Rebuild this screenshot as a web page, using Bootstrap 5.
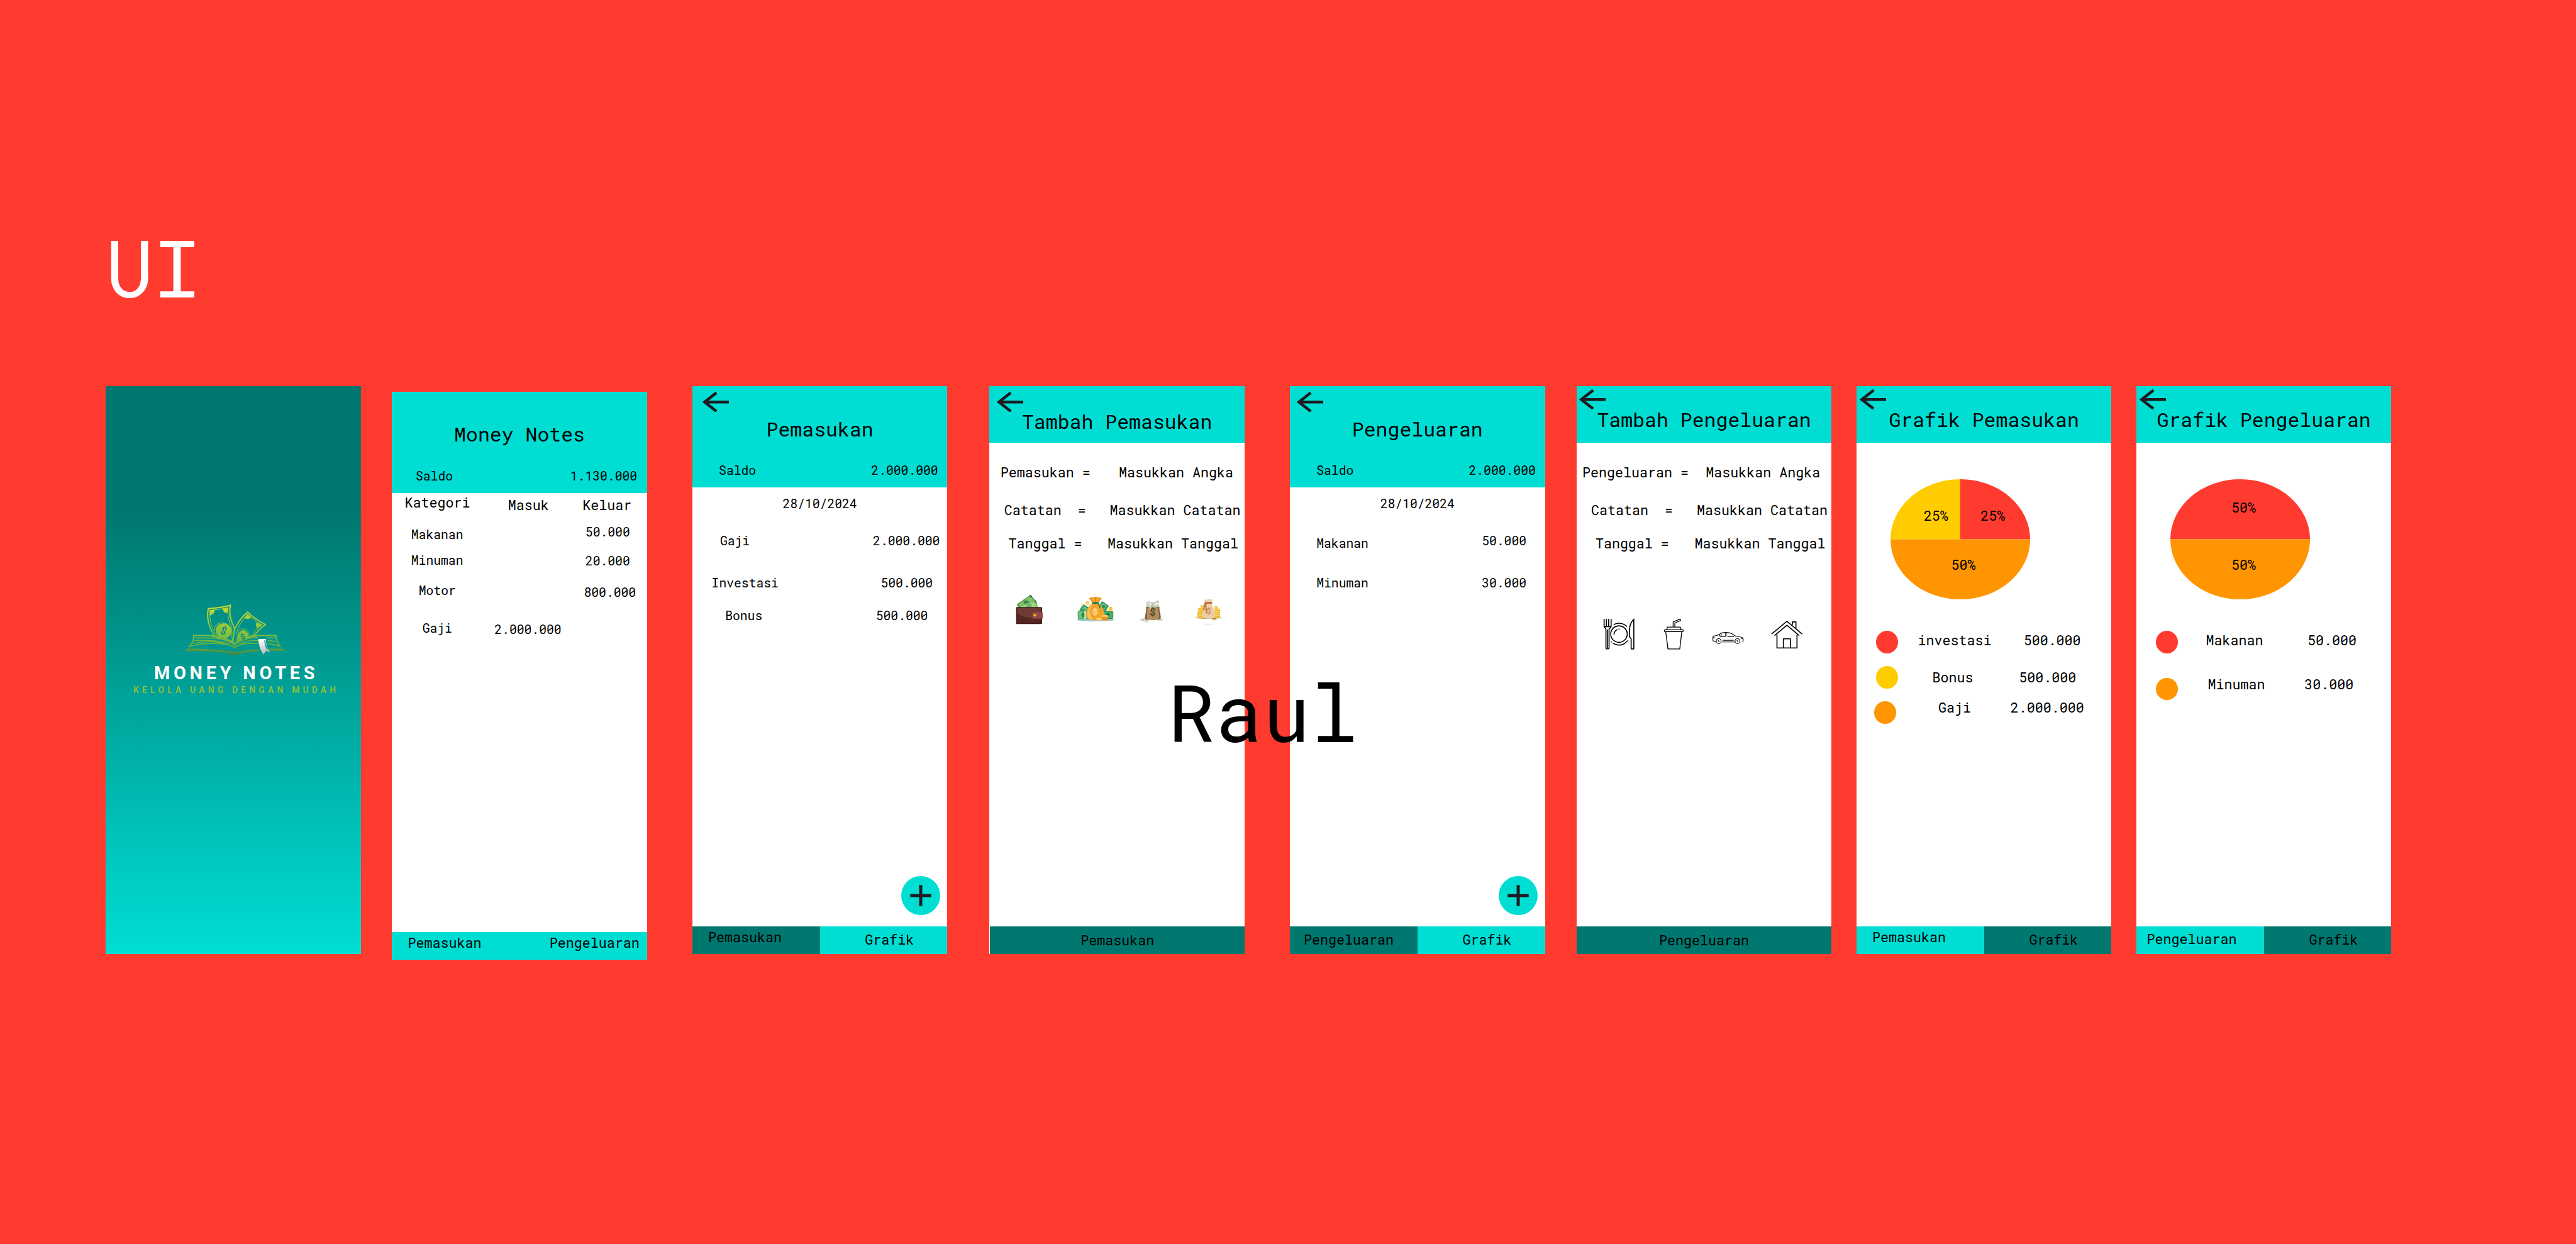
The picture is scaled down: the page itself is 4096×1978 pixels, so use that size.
<!DOCTYPE html>
<html lang="id">
<head>
<meta charset="utf-8">
<title>Money Notes UI</title>
<meta name="viewport" content="width=device-width, initial-scale=1">
<link href="https://cdn.jsdelivr.net/npm/bootstrap@5.3.0/dist/css/bootstrap.min.css" rel="stylesheet">
<style>
/* 1rem = 10 design units */
html{font-size:9.84615px}
body{background:#ff3b30;color:#000;font-family:"Roboto Mono","DejaVu Sans Mono","Liberation Mono",monospace;overflow:hidden}
.board{height:100vh;padding:37.37rem 0 0 17.1rem}
.t20,.t22,.t32,.t128{white-space:pre;font-weight:400;margin:0;color:#000;line-height:.898}
.t20{font-size:2rem}
.t22{font-size:2.2rem}
.t32{font-size:3.2rem}
.t128{font-size:12.8rem}
.ui-title{color:#fff;margin-bottom:13.54rem}
.raul{left:188.55rem;top:109.15rem;z-index:5}
.phone{width:41.2rem;height:91.7rem;background:#fff;flex:none}
.splash{background:linear-gradient(#00776f 22%,#00ded4 100%);padding:34.6rem 0 0 2.9rem}
.splash svg{width:36rem;height:16rem}
.p2{margin:.9rem 0 0 5rem}.p3{margin-left:7.3rem}.p4{margin-left:6.8rem}.p5{margin-left:7.3rem}.p6{margin-left:5.1rem}.p7,.p8{margin-left:4rem}
.top-tall{height:16.3rem;background:#00ded4}
.top-short{height:9.1rem;background:#00ded4}
.back{width:4.3rem;height:3.3rem;left:1.6rem;top:.83rem}
.back svg,.fab svg{display:block;width:100%;height:100%}
.p4 .back{left:1.13rem}.p5 .back{left:1.1rem}
.p6 .back,.p7 .back,.p8 .back{left:.48rem;top:.46rem}
.h-main{padding-top:5.4rem;height:12.65rem}
.h-add{padding-top:4.19rem}.h-graph{padding-top:3.92rem}
.ln{display:flex;align-items:flex-start}
.saldo-a{margin-left:4.3rem}.saldo-b{margin-right:1.5rem}
.p2 .saldo-a{margin-left:3.83rem}.p2 .saldo-b{margin-right:1.6rem}
.foot{height:4.5rem}
.cy{background:#00ded4}.tl{background:#00776f}
.fab{width:6.3rem;height:6.3rem;right:1.2rem;bottom:6.3rem;background:#00ded4}
.dot-k{width:3.53rem;height:3.6rem;border-radius:50%;flex:none}
.bg-r{background:#ff3b30}.bg-y{background:#fc0}.bg-o{background:#ff9500}
.pie{width:22.55rem;height:19.4rem;margin:5.9rem 0 5.1rem 5.55rem;display:block}
.pie text{font-size:22px;text-anchor:middle}
/* summary list */
.p2 main{padding-top:.58rem}
.p2 .k1{height:4.83rem}.p2 .k2{height:4.55rem}.p2 .k3{height:4.9rem}.p2 .k4{height:6.1rem}
.k1 .a{margin-left:2.07rem}.k1 .b{margin:.4rem 0 0 6.12rem}.k1 .c{margin:.4rem 2.51rem 0 auto}
.k2 .a,.k3 .a{margin-left:3.1rem}.k2 .a{padding-top:.36rem}.k2 .c,.k3 .c{margin-right:2.76rem}.k3 .c{padding-top:.15rem}
.k4 .a{margin-left:4.32rem}.k4 .c{margin:.27rem 1.8rem 0 0}
.k5 .a{margin-left:4.92rem}.k5 .b{margin:.15rem 0 0 6.84rem}
/* transaction lists */
.date{padding-top:1.73rem;height:7.7rem}
.m1{height:6.83rem}.m2{height:5.3rem}
.m1 .a{margin-left:4.48rem}.m1 .c{margin-right:1.22rem}
.m2 .a{margin-left:3.13rem}.m2 .c{margin-right:2.36rem}
.m3 .a{margin-left:5.32rem}.m3 .c{margin-right:3.15rem}
.n1{height:6.83rem}.n1 .a{padding-top:.45rem}
.n1 .a,.n2 .a{margin-left:4.3rem}.n1 .c,.n2 .c{margin-right:3rem}
/* entry forms */
.form-rows{padding-top:3.8rem}
.f1{height:6.1rem}.f2{height:5.36rem}.f3{height:2.2rem}
.f1 .a{margin-left:1.76rem}.f1 .c{margin-right:1.84rem}
.p6 .f1 .a{margin-left:.94rem}
.f2 .a{margin-left:2.37rem}.f2 .c{margin-right:.66rem}
.f3 .a{margin-left:3.06rem}.f3 .c{margin-right:1.02rem}
.pics-in{margin:6.87rem 0 0 4.03rem}.pics-in svg{height:5.167rem;flex:none}
.w1{width:4.833rem;margin-right:4.66rem}.w2{width:7.167rem;margin-right:3.33rem}.w3{width:4.333rem;margin-right:4.5rem}.w4{width:5.167rem}
.pics-out{margin:10.71rem 0 0 4.23rem}.pics-out svg{height:5.5rem;flex:none}
.o1{width:5.333rem;margin-right:4.34rem}.o2{width:3.5rem;margin-right:4.4rem}.o3{width:5.367rem;margin-right:4.16rem}.o4{width:5.333rem}
/* chart legends */
.g1{height:5.7rem;padding-left:3.18rem}.g1 .a{margin:.46rem 0 0 3.21rem}.g1 .c{margin:.46rem 4.96rem 0 0}
.g2{height:5.66rem;padding-left:3.18rem}.g2 .a{margin:.76rem 0 0 5.55rem}.g2 .c{margin:.76rem 5.71rem 0 0}
.g3{padding-left:2.88rem}.g3 .a{margin-left:6.81rem}.g3 .c{margin-right:4.45rem}
.q1{height:7.55rem;padding-left:3.18rem}.q1 .a{margin:.46rem 0 0 4.53rem}.q1 .c{margin:.46rem 5.64rem 0 0}
.q2{padding-left:3.18rem}.q2 .a{margin-left:4.83rem}.q2 .c{margin-right:6.12rem}
/* footer labels */
.x-pem{padding:.76rem 0 0 2.56rem}.x-gra{padding:1.16rem 0 0 7.29rem}.x-pen{padding:1.16rem 0 0 2.25rem}.x-pen8{padding:1.06rem 0 0 1.69rem}
.x-full{padding-top:1.26rem}.p4 .foot{margin-left:.1rem}
.x-pen2{padding:.76rem 1.24rem 0 0}
</style>
<script src="https://cdn.jsdelivr.net/npm/bootstrap@5.3.0/dist/js/bootstrap.bundle.min.js"></script>
</head>
<body>
<svg class="d-none">
  <symbol id="arrow" viewBox="0 0 43 33"><path d="M43 16.5H4M22.500 1.500L3.500 16.500L22.500 31.500" fill="none" stroke="#1d1b20" stroke-width="4.600"/></symbol>
  <symbol id="plus" viewBox="0 0 63 63"><path d="M14.500 31.500h34M31.500 14.500v34" stroke="#1d1b20" stroke-width="5"/></symbol>
</svg>
<div class="board position-relative">
  <h1 class="t128 ui-title">UI</h1>
  <div class="d-flex align-items-start">

    <section class="phone splash">
      <svg viewBox="0 60 1080 480">
        <defs><linearGradient id="lg" gradientUnits="userSpaceOnUse" x1="0" y1="80" x2="0" y2="330"><stop offset="0" stop-color="#cddc2c"/><stop offset=".55" stop-color="#84bf3f"/><stop offset=".8" stop-color="#5fae44"/><stop offset="1" stop-color="#3c8048"/></linearGradient>
        <linearGradient id="rb" x1="0" y1="0" x2="0" y2="1"><stop offset="0" stop-color="#fff"/><stop offset="1" stop-color="#b4b8ba"/></linearGradient></defs>
        <g fill="none" stroke="url(#lg)" stroke-width="5">
          <path d="M438 226C410 190 400 140 409 99C445 96 485 92 516 83C507 130 522 165 536 194C533 225 528 245 523 262" stroke-width="6"/>
          <path d="M450 226C420 190 412 140 418 107C450 104 480 100 505 94C500 130 510 165 525 195" stroke-width="3"/>
          <path d="M536 200C552 165 575 135 600 116C625 140 655 160 686 176C665 190 645 210 632 230M530 262C530 235 532 215 536 200" stroke-width="6"/>
          <path d="M545 215C560 175 580 145 602 128C625 150 648 164 670 177C650 190 632 210 620 231" stroke-width="3"/>
          <path d="M438 205C435 175 465 160 495 172C520 182 530 210 520 240M545 225C550 200 575 190 595 202C605 210 610 225 606 238" stroke-width="3"/>
          <path d="M430 229H338C340 250 330 270 314 284C390 262 470 262 524 280L537 291L550 280C575 268 610 264 648 268M622 229H736C738 250 744 268 760 284C740 275 720 270 697 269" stroke-width="6"/>
          <path d="M345 241H430C470 243 505 255 537 272C570 250 600 238 650 240M694 241H730M342 254C400 250 460 254 512 270M338 268C390 255 440 258 480 265M560 270C590 256 620 252 652 254M697 254C710 254 722 256 735 260"/>
        </g>
        <g fill="url(#lg)">
          <path d="M415 106h25c0 15-12 24-23 26zM480 98l25-4-4 26c-14 0-22-8-21-22zM582 144l18-20 18 18c-12 8-26 8-36 2zM642 166l28 11-24 16c-7-8-8-18-4-27z"/>
          <ellipse cx="483" cy="206" rx="39" ry="35" transform="rotate(25 483 206)"/>
          <path d="M545 262C545 225 560 203 580 203C600 207 606 222 602 238C580 245 560 256 545 262z"/>
          <path d="M428 226C475 230 510 245 537 264C565 243 600 228 640 226L638 236C600 238 565 255 540 276L537 295L532 276C500 252 470 240 428 236z"/>
          <path d="M300 293C370 290 450 298 514 305C530 308 548 308 560 305C590 299 620 296 652 296L655 306C620 308 580 312 560 318C550 325 525 328 514 318C450 306 380 304 298 306zM703 292H772L774 304L710 304z"/>
        </g>
        <text x="483" y="224" font-size="50" font-weight="700" font-family="Roboto,sans-serif" fill="#0b8f7c" text-anchor="middle" transform="rotate(22 483 206)">$</text>
        <text x="576" y="248" font-size="38" font-weight="700" font-family="Roboto,sans-serif" fill="#0b8f7c" text-anchor="middle" transform="rotate(-22 576 236)">$</text>
        <path d="M651 246h38c-2 22 5 46 20 65l-19-8-15 18c-14-22-23-48-24-75z" fill="url(#rb)"/>
        <path d="M683 250c0 18 4 34 12 48" stroke="#0b9189" stroke-width="5" fill="none"/>
        <text x="146" y="442" font-size="88" font-weight="700" font-family="Roboto,sans-serif" fill="#fff" textLength="779">MONEY NOTES</text>
        <text x="46" y="509" font-size="42" font-weight="600" font-family="Roboto,sans-serif" fill="#8fc13b" textLength="981">KELOLA UANG DENGAN MUDAH</text>
      </svg>
    </section>

    <section class="phone p2 d-flex flex-column">
      <header class="top-tall">
        <h2 class="t32 h-main text-center">Money Notes</h2>
        <div class="ln justify-content-between"><span class="t20 saldo-a">Saldo</span><span class="t20 saldo-b">1.130.000</span></div>
      </header>
      <main class="flex-grow-1">
        <div class="ln k1"><span class="t22 a">Kategori</span><span class="t22 b">Masuk</span><span class="t22 c">Keluar</span></div>
        <div class="ln k2 justify-content-between"><span class="t20 a">Makanan</span><span class="t20 c">50.000</span></div>
        <div class="ln k3 justify-content-between"><span class="t20 a">Minuman</span><span class="t20 c">20.000</span></div>
        <div class="ln k4 justify-content-between"><span class="t20 a">Motor</span><span class="t20 c">800.000</span></div>
        <div class="ln k5"><span class="t20 a">Gaji</span><span class="t20 b">2.000.000</span></div>
      </main>
      <footer class="foot cy d-flex justify-content-between"><span class="t22 x-pem">Pemasukan</span><span class="t22 x-pen2">Pengeluaran</span></footer>
    </section>

    <section class="phone p3 d-flex flex-column position-relative">
      <header class="top-tall">
        <div class="back position-absolute"><svg><use href="#arrow"/></svg></div>
        <h2 class="t32 h-main text-center">Pemasukan</h2>
        <div class="ln justify-content-between"><span class="t20 saldo-a">Saldo</span><span class="t20 saldo-b">2.000.000</span></div>
      </header>
      <main class="flex-grow-1">
        <div class="t20 date text-center">28/10/2024</div>
        <div class="ln m1 justify-content-between"><span class="t20 a">Gaji</span><span class="t20 c">2.000.000</span></div>
        <div class="ln m2 justify-content-between"><span class="t20 a">Investasi</span><span class="t20 c">500.000</span></div>
        <div class="ln m3 justify-content-between"><span class="t20 a">Bonus</span><span class="t20 c">500.000</span></div>
      </main>
      <div class="fab rounded-circle position-absolute"><svg><use href="#plus"/></svg></div>
      <footer class="foot d-flex"><span class="t22 x-pem w-50 tl">Pemasukan</span><span class="t22 x-gra w-50 cy">Grafik</span></footer>
    </section>

    <section class="phone p4 d-flex flex-column position-relative">
      <header class="top-short">
        <div class="back position-absolute"><svg><use href="#arrow"/></svg></div>
        <h2 class="t32 h-add text-center">Tambah Pemasukan</h2>
      </header>
      <main class="flex-grow-1 form-rows">
        <div class="ln f1 justify-content-between"><span class="t22 a">Pemasukan =</span><span class="t22 c">Masukkan Angka</span></div>
        <div class="ln f2 justify-content-between"><span class="t22 a">Catatan  =</span><span class="t22 c">Masukkan Catatan</span></div>
        <div class="ln f3 justify-content-between"><span class="t22 a">Tanggal =</span><span class="t22 c">Masukkan Tanggal</span></div>
        <div class="d-flex pics-in">
          <svg class="w1" viewBox="115 115 145 155">
            <path d="M126 166L194 120L226 160L215 185H135z" fill="#5aa052"/><path d="M133 168L192 127L216 158L150 182z" fill="#86c268"/>
            <path d="M186 124l8-4 7 9-8 4z" fill="#2f7d43"/><ellipse cx="172" cy="156" rx="13" ry="8" fill="#37884a"/>
            <path d="M140 172L218 147L231 184H142z" fill="#74b765"/><path d="M148 176L213 153L224 184H150z" fill="#a0d57e"/>
            <circle cx="186" cy="175" r="13" fill="#6cb66a"/><path d="M210 149l9-2 4 10-8 3z" fill="#3d8b4c"/>
            <rect x="123" y="180" width="126" height="82" rx="4" fill="#4a2020"/><path d="M128 185h116v40c-50 18-100 0-116-15z" fill="#6e3a33"/><path d="M128 212c30 22 70 24 116 14v31H128z" fill="#542624"/>
            <rect x="127" y="184" width="118" height="74" fill="none" stroke="#3a1818" stroke-width="2"/>
            <rect x="202" y="204" width="50" height="32" rx="4" fill="#8a4b48"/><circle cx="214" cy="219" r="7" fill="#f6a623"/>
          </svg>
          <svg class="w2" viewBox="400 115 215 155">
            <ellipse cx="507" cy="242" rx="93" ry="7" fill="#a9c9cf"/><circle cx="440" cy="214" r="24" fill="#cfe8b4"/><circle cx="574" cy="214" r="24" fill="#f3e3ae"/>
            <path d="M432 188L448 166L478 184V205H432z" fill="#2f9a5b"/><path d="M441 187l9-13 20 12v14z" fill="#63bd7d"/>
            <path d="M520 180L538 151L571 174L553 204z" fill="#2c9b60"/><path d="M528 180l13-20 20 14-12 20z" fill="#6cc489"/><circle cx="545" cy="178" r="8" fill="#2c8d56"/>
            <rect x="422" y="197" width="58" height="42" fill="#3aa564"/><rect x="426" y="201" width="50" height="34" fill="#72c486"/><circle cx="450" cy="218" r="12" fill="#268650"/><path d="M452 197h8v42h-8z" fill="#c6e6b4"/>
            <rect x="535" y="200" width="56" height="38" fill="#2a9558"/><rect x="541" y="205" width="44" height="28" fill="#50b273"/><circle cx="566" cy="218" r="9" fill="#1f7c47"/>
            <circle cx="468" cy="160" r="9" fill="#f9c146"/><circle cx="468" cy="160" r="5" fill="#fbdc7e"/><circle cx="579" cy="187" r="9" fill="#f9b92c"/><circle cx="579" cy="187" r="5" fill="#fbd560"/>
            <path d="M438 160l2 4 4 1-4 2-1 4-2-4-4-2 4-1zM577 160l1 3 3 1-3 1-1 3-1-3-3-1 3-1z" fill="#f8c653"/>
            <path d="M493 160C475 172 460 196 461 218C462 238 475 243 505 243C538 243 550 238 550 218C549 192 535 172 520 160z" fill="#f6a52c"/><path d="M493 165C475 180 466 200 468 222C470 236 480 240 495 240C475 225 475 190 493 165z" fill="#fbc255"/>
            <path d="M474 137C485 128 495 134 505 130C515 130 525 132 537 136L521 158H491z" fill="#f4a52e"/><path d="M480 137l14 19M505 131v25M530 137l-12 19" stroke="#ce6f1d" stroke-width="3"/>
            <path d="M490 156h32v8h-32z" fill="#1c7442"/><path d="M517 163l14 13-2 12-8-14z" fill="#14743e"/>
            <circle cx="504" cy="203" r="21" fill="#f8b440" stroke="#d9822a" stroke-width="2"/><text x="504" y="216" font-size="37" text-anchor="middle" font-family="Roboto,sans-serif" fill="#fff4c2">$</text>
            <ellipse cx="524" cy="239" rx="16" ry="6" fill="#f9c145"/><ellipse cx="524" cy="236" rx="11" ry="4" fill="#fbe084"/>
            <path d="M538 223h30v18c-6 6-24 6-30 0z" fill="#ef9c2b"/><ellipse cx="553" cy="223" rx="16" ry="5" fill="#fbcf5f"/><path d="M537 230q16 7 32 0M537 237q16 7 32 0" stroke="#c66d17" stroke-width="2" fill="none"/>
          </svg>
          <svg class="w3" viewBox="715 115 130 155">
            <path d="M724 240l16-6 22 5 5 9-14 7-12-8-17-1zM805 236l20-3 12 6-8 6-22 1z" fill="#d3d8c6"/><path d="M730 240l12 4M745 238l12 8M812 239l14 2" stroke="#94a283" stroke-width="2"/>
            <path d="M754 178C758 195 746 225 748 238C766 245 805 245 822 236C826 220 815 195 816 178C800 170 770 170 754 178z" fill="#b08c60"/><path d="M753 178C754 205 745 225 748 238L762 241C752 220 757 195 760 178zM817 178C815 205 828 220 822 236L812 240C819 220 811 195 811 178z" fill="#846039"/>
            <path d="M751 160l12-9 18 6 18-3 8-7 9 3-5 14 5 15c-15 7-45 7-61 0l3-10z" fill="#c6ccb8"/><path d="M757 161l15-5 10 8-12 8zM786 163l17-8 8 8-15 10zM769 172l7 3 1 26-7-5z" fill="#eef1e6"/><path d="M755 170l14-8M780 158l7 13M799 154l-7 13M776 178l12-6" stroke="#869a7e" stroke-width="2"/>
            <path d="M753 179q32 13 63 0" fill="none" stroke="#6e512f" stroke-width="3"/>
            <text x="784" y="223" font-size="49" font-weight="700" text-anchor="middle" font-family="Roboto,sans-serif" fill="#4d4d22">$</text>
          </svg>
          <svg class="w4" viewBox="980 115 155 155">
            <ellipse cx="1056" cy="231" rx="68" ry="7" fill="#d8d8da"/><path d="M1020 234h70" stroke="#4a3c34" stroke-width="4"/>
            <g fill="#f0bd35"><path d="M1000 206h14v27h-14zM1005 184h13v49h-13zM1017 171h18v62h-18zM1085 175h14v58h-14zM1097 187h14v47h-14z"/></g>
            <path d="M1000 213h35M1003 221h32M1005 199h30M1006 191h29M1017 181h18M1085 184h14M1085 193h26M1085 202h26M1085 211h26M1085 220h26" stroke="#f9da73" stroke-width="3"/>
            <path d="M1038 168C1028 190 1020 220 1028 232C1045 238 1070 238 1085 232C1092 215 1080 185 1071 168z" fill="#ebcda1"/>
            <path d="M1035 148c5-8 12-6 16-4 6-4 12-4 14 0 5-4 9 0 9 4l-4 12h-32z" fill="#ecd1aa"/><path d="M1036 156h37v9h-37z" fill="#b8603a"/><path d="M1038 163l-7 32M1042 165l2 44" stroke="#b35b3a" stroke-width="5"/>
            <text x="1056" y="214" font-size="40" text-anchor="middle" font-family="Roboto,sans-serif" fill="#c4794e">$</text>
            <ellipse cx="1083" cy="240" rx="12" ry="4" fill="#f1c64b"/><ellipse cx="1024" cy="236" rx="8" ry="3" fill="#f1c64b"/><path d="M1034 262h45" stroke="#d6d6d6" stroke-width="3"/>
          </svg>
        </div>
      </main>
      <footer class="foot tl text-center"><div class="t22 x-full">Pemasukan</div></footer>
    </section>

    <section class="phone p5 d-flex flex-column position-relative">
      <header class="top-tall">
        <div class="back position-absolute"><svg><use href="#arrow"/></svg></div>
        <h2 class="t32 h-main text-center">Pengeluaran</h2>
        <div class="ln justify-content-between"><span class="t20 saldo-a">Saldo</span><span class="t20 saldo-b">2.000.000</span></div>
      </header>
      <main class="flex-grow-1">
        <div class="t20 date text-center">28/10/2024</div>
        <div class="ln n1 justify-content-between"><span class="t20 a">Makanan</span><span class="t20 c">50.000</span></div>
        <div class="ln n2 justify-content-between"><span class="t20 a">Minuman</span><span class="t20 c">30.000</span></div>
      </main>
      <div class="fab rounded-circle position-absolute"><svg><use href="#plus"/></svg></div>
      <footer class="foot d-flex"><span class="t22 x-pen w-50 tl">Pengeluaran</span><span class="t22 x-gra w-50 cy">Grafik</span></footer>
    </section>

    <section class="phone p6 d-flex flex-column position-relative">
      <header class="top-short">
        <div class="back position-absolute"><svg><use href="#arrow"/></svg></div>
        <h2 class="t32 h-graph text-center">Tambah Pengeluaran</h2>
      </header>
      <main class="flex-grow-1 form-rows">
        <div class="ln f1 justify-content-between"><span class="t22 a">Pengeluaran =</span><span class="t22 c">Masukkan Angka</span></div>
        <div class="ln f2 justify-content-between"><span class="t22 a">Catatan  =</span><span class="t22 c">Masukkan Catatan</span></div>
        <div class="ln f3 justify-content-between"><span class="t22 a">Tanggal =</span><span class="t22 c">Masukkan Tanggal</span></div>
        <div class="d-flex pics-out">
          <svg class="o1" viewBox="85 80 160 165" fill="none" stroke="#000" stroke-width="5">
            <path d="M93 90v36c0 6 9 9 9 14v90c0 6 15 6 15 0v-90c0-5 10-8 10-14V90M93 127h34M110 140v90"/><path d="M104 90v37M115 90v37" stroke-width="5"/>
            <circle cx="165" cy="163" r="40"/><path d="M141 165c0-12 7-20 16-24M163 139h5M139 117c22-11 48-8 65 10M207 194c-15 22-45 30-72 13M126 201h5"/>
            <path d="M237 92v140c0 4-13 4-13 0v-46l-8-10c-2-36 0-66 21-84z"/>
          </svg>
          <svg class="o2" viewBox="375 80 105 165" fill="none" stroke="#000" stroke-width="4">
            <path d="M425 128v-24l33-14 3 7-28 12v19M394 142l3-13h63l4 13M389 151h78l-10 84h-57z" stroke-linejoin="round"/><rect x="382" y="142" width="92" height="9" rx="4"/>
          </svg>
          <svg class="o3" viewBox="612 80 161 165" fill="none" stroke="#000" stroke-width="3.500" stroke-linejoin="round">
            <path d="M635 199c-14-1-15-3-15-9v-15c8-4 20-5 30-10l12-8c20-3 40-1 48 3l20 13c15 2 29 4 35 9 3 7 2 14-1 20M664 201h62M668 193h52M652 166c0 5 2 8 8 8h22v-17M660 158v14M690 174h32M684 157v16M620 180h8M757 182l7 4"/>
            <circle cx="648" cy="197" r="12"/><circle cx="739" cy="197" r="12"/><path d="M645 193l6 8M736 193l6 8"/>
          </svg>
          <svg class="o4" viewBox="898 80 160 165" fill="none" stroke="#000" stroke-width="5" stroke-linejoin="round">
            <path d="M904 163l74-62 74 62M918 170l60-50 60 50M930 165v65h97v-65M961 230v-44h34v44M1005 118v-14h17v35"/>
          </svg>
        </div>
      </main>
      <footer class="foot tl text-center"><div class="t22 x-full">Pengeluaran</div></footer>
    </section>

    <section class="phone p7 d-flex flex-column position-relative">
      <header class="top-short">
        <div class="back position-absolute"><svg><use href="#arrow"/></svg></div>
        <h2 class="t32 h-graph text-center">Grafik Pemasukan</h2>
      </header>
      <main class="flex-grow-1">
        <svg class="pie" viewBox="0 0 225.500 194">
          <path d="M0 97A112.750 97 0 0 1 112.750 0V97z" fill="#fc0"/><path d="M112.750 0A112.750 97 0 0 1 225.500 97H112.750z" fill="#ff3b30"/><path d="M0 97H225.500A112.750 97 0 0 1 0 97z" fill="#ff9500"/>
          <text x="73.500" y="67.500">25%</text><text x="165.200" y="67.500">25%</text><text x="117.800" y="146">50%</text>
        </svg>
        <div class="ln g1"><span class="dot-k bg-r"></span><span class="t22 a">investasi</span><span class="t22 c ms-auto">500.000</span></div>
        <div class="ln g2"><span class="dot-k bg-y"></span><span class="t22 a">Bonus</span><span class="t22 c ms-auto">500.000</span></div>
        <div class="ln g3"><span class="dot-k bg-o"></span><span class="t22 a">Gaji</span><span class="t22 c ms-auto">2.000.000</span></div>
      </main>
      <footer class="foot d-flex"><span class="t22 x-pem w-50 cy">Pemasukan</span><span class="t22 x-gra w-50 tl">Grafik</span></footer>
    </section>

    <section class="phone p8 d-flex flex-column position-relative">
      <header class="top-short">
        <div class="back position-absolute"><svg><use href="#arrow"/></svg></div>
        <h2 class="t32 h-graph text-center">Grafik Pengeluaran</h2>
      </header>
      <main class="flex-grow-1">
        <svg class="pie" viewBox="0 0 225.500 194">
          <path d="M0 97A112.750 97 0 0 1 225.500 97z" fill="#ff3b30"/><path d="M0 97H225.500A112.750 97 0 0 1 0 97z" fill="#ff9500"/>
          <text x="118.400" y="54">50%</text><text x="118.400" y="146">50%</text>
        </svg>
        <div class="ln q1"><span class="dot-k bg-r"></span><span class="t22 a">Makanan</span><span class="t22 c ms-auto">50.000</span></div>
        <div class="ln q2"><span class="dot-k bg-o"></span><span class="t22 a">Minuman</span><span class="t22 c ms-auto">30.000</span></div>
      </main>
      <footer class="foot d-flex"><span class="t22 x-pen8 w-50 cy">Pengeluaran</span><span class="t22 x-gra w-50 tl">Grafik</span></footer>
    </section>
  </div>
  <div class="t128 raul position-absolute">Raul</div>
</div>
</body>
</html>
